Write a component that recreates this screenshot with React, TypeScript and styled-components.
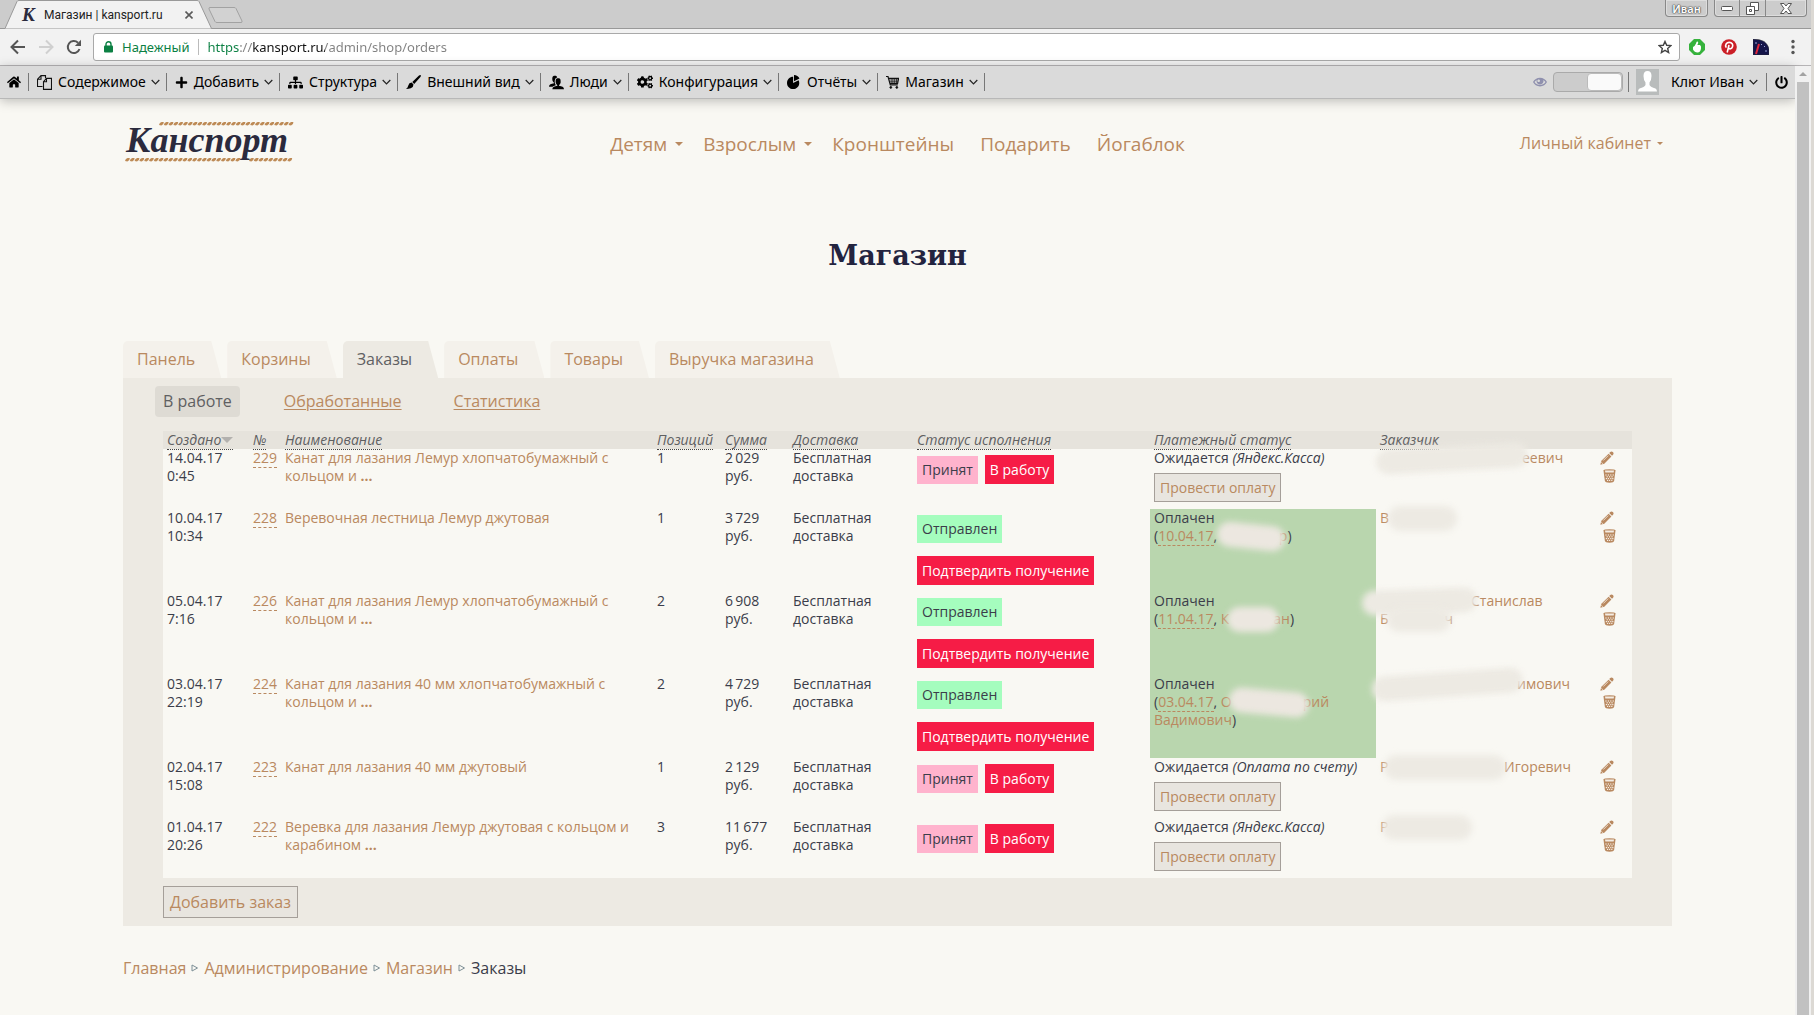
import React from 'react';
import styled, { createGlobalStyle, css } from 'styled-components';
import { FaHome, FaPlus, FaSitemap, FaCogs, FaPowerOff } from 'react-icons/fa';
import { ImUsers, ImPieChart, ImEye } from 'react-icons/im';

const c = {
  page: '#f9f8f3',
  accent: '#b98960',
  ink: '#3b3d4a',
  muted: '#5f6062',
  panel: '#edeae3',
  head: '#e6e3dc',
  red: '#f61c46',
  green: '#b9d6ae',
};

const GlobalStyle = createGlobalStyle`
  *, *::before, *::after { box-sizing: border-box; }
  body { margin: 0; background: ${c.page}; }
  button, input { font: inherit; color: inherit; }
  a { color: inherit; text-decoration: none; }
`;

const uiFont = css`font-family: "Noto Sans", "Open Sans", sans-serif;`;

const Screen = styled.div`
  min-height: 100vh;
  display: flex;
  flex-direction: column;
  background: ${c.page};
  border-right: 3px solid #dcd9d4;
  font-family: "Open Sans", "Noto Sans", sans-serif;
`;

/* ---------- browser window ---------- */

const TabStrip = styled.div`
  ${uiFont}
  display: flex;
  align-items: flex-start;
  height: 29px;
  background: #ccc;
  border-bottom: 1px solid #999;
`;

const BrowserTab = styled.div`
  position: relative;
  display: flex;
  align-items: center;
  width: 207px;
  height: 29px;
  margin-left: 5px;
  padding: 0 19px 0 17px;
  font-family: Roboto, "Noto Sans", sans-serif;
  font-size: 12px;
  color: #222;
`;

const TabShape = styled.svg`
  position: absolute;
  inset: 0;
`;

const Favicon = styled.span`
  position: relative;
  width: 16px;
  font: italic bold 19px/20px "Liberation Serif", serif;
  color: #2b2a3d;
`;

const TabTitle = styled.span`
  position: relative;
  flex: 1;
  margin-left: 6px;
  white-space: nowrap;
`;

const PlainButton = styled.button`
  position: relative;
  display: flex;
  align-items: center;
  justify-content: center;
  padding: 0;
  border: 0;
  background: none;
  cursor: pointer;
`;

const NewTab = styled(PlainButton)`
  margin: 6px 0 0 -4px;
`;

const WindowControls = styled.div`
  display: flex;
  gap: 6px;
  margin-left: auto;
  padding-right: 4px;
`;

const ControlGroup = styled.div`
  display: flex;
  height: 17px;
  border: 1px solid #888;
  border-top: 0;
  border-radius: 0 0 4px 4px;
  box-shadow: inset 0 0 0 1px #ddd;
`;

const Control = styled(PlainButton)<{ $w: number }>`
  width: ${p => p.$w}px;
  font-size: 11px;
  font-weight: 600;
  color: #fff;
  text-shadow: 0 0 1px #444, 0 0 1px #444, 0 0 2px #444;
  & + & { border-left: 1px solid #888; }
`;

const AddressRow = styled.div`
  ${uiFont}
  display: flex;
  align-items: center;
  height: 37px;
  padding: 0 10px;
  background: #f2f2f2;
  border-bottom: 1px solid #b6b4b6;
`;

const NavButtons = styled.div`
  display: flex;
  gap: 12px;
  margin-right: 11px;
`;

const AddressBar = styled.div`
  display: flex;
  align-items: center;
  flex: 1;
  height: 28px;
  margin-right: 9px;
  padding: 0 7px 0 10px;
  background: #fff;
  border: 1px solid #a9a9a9;
  border-radius: 3px;
  font-size: 13px;
`;

const Secure = styled.span`
  display: flex;
  align-items: center;
  gap: 9px;
  padding-right: 9px;
  border-right: 1px solid #bbb;
  line-height: 16px;
  color: #0b8043;
`;

const UrlInput = styled.input`
  flex: 1;
  min-width: 0;
  margin-left: 8px;
  padding: 0;
  border: 0;
  outline: 0;
  line-height: 20px;
  background: linear-gradient(90deg, #0b8043 32px, #808080 32px 45px, #111 45px 118px, #808080 118px);
  background-clip: text;
  -webkit-background-clip: text;
  -webkit-text-fill-color: transparent;
`;

const Extensions = styled.div`
  display: flex;
  align-items: center;
  gap: 16px;
`;

/* ---------- page frame ---------- */

const Viewport = styled.div`
  flex: 1;
  display: flex;
`;

const Page = styled.div`
  flex: 1;
  min-width: 0;
`;

const ScrollTrack = styled.div`
  display: flex;
  flex-direction: column;
  width: 16px;
  background: #f1f1f1;
`;

const ScrollUp = styled(PlainButton)`
  height: 16px;
`;

const ScrollThumb = styled.div`
  flex: 1;
  margin: 0 2px;
  background: #c1c1c1;
`;

/* ---------- admin toolbar ---------- */

const AdminBar = styled.nav`
  ${uiFont}
  display: flex;
  align-items: center;
  height: 33px;
  padding: 0 7px;
  background: #dadada;
  border-bottom: 1px solid #b8b8b8;
  box-shadow: 0 2px 12px rgba(0, 0, 0, 0.25);
  font-size: 14px;
  line-height: 20px;
  color: #000;
`;

const AdminItem = styled(PlainButton)`
  justify-content: flex-start;
  height: 18px;
  padding: 0 6px 0 8px;
  border-right: 1px solid #777;
  white-space: nowrap;
  & > svg:first-child { margin-right: 6px; flex: none; }
  & > svg:last-child { margin-left: 5px; flex: none; }
`;

const HomeItem = styled(AdminItem)`
  padding: 0 7px 0 0;
  & > svg:first-child { margin: 0; }
`;

const AdminRight = styled.div`
  display: flex;
  align-items: center;
  margin-left: auto;
`;

const PreviewToggle = styled.label`
  display: flex;
  align-items: center;
  gap: 6px;
  padding-right: 5px;
  border-right: 1px solid #777;
  color: #8f90ae;
`;

const Switch = styled.input`
  appearance: none;
  display: flex;
  width: 70px;
  height: 20px;
  margin: 0;
  background: #ccc;
  border: 1px solid #aaa;
  border-radius: 4px;
  &::after {
    content: "";
    width: 35px;
    margin-left: auto;
    background: #fafafa;
    border: 1px solid #bbb;
    border-radius: 4px;
  }
`;

const UserItem = styled(AdminItem)`
  height: 26px;
  padding: 0 8px 0 7px;
  border: 0;
  & > svg:first-child { margin-right: 12px; }
`;

const PowerItem = styled(PlainButton)`
  height: 18px;
  padding-left: 8px;
  border-left: 1px solid #777;
`;

/* ---------- site ---------- */

const Container = styled.div`
  padding: 0 123px;
  color: ${c.ink};
`;

const Header = styled.header`
  display: grid;
  grid-template-columns: 1fr auto 1fr;
  align-items: start;
  padding-top: 22px;
  color: ${c.accent};
`;

const MainNav = styled.nav`
  display: flex;
  padding-top: 8px;
  font-size: 19px;
  line-height: 30px;
`;

const MainLink = styled.a<{ $caret?: boolean }>`
  display: flex;
  align-items: center;
  gap: 8px;
  padding: 0 ${p => (p.$caret ? 7 : 13)}px 0 13px;
`;

const Account = styled.a`
  display: flex;
  align-items: center;
  justify-self: end;
  gap: 6px;
  padding: 9px 9px 0 0;
  font-size: 16px;
  line-height: 26px;
`;

const Title = styled.h1`
  margin: 66px 0 0;
  font: bold 27px/44px "Roboto Slab", "DejaVu Serif", serif;
  text-align: center;
  color: #23243f;
`;

const Tabs = styled.nav`
  display: flex;
  gap: 6px;
  margin-top: 63px;
`;

const Tab = styled.a<{ $active?: boolean }>`
  padding: 0 26px 0 14px;
  border-radius: 5px 0 0 0;
  background: ${p => (p.$active ? c.panel : '#f4f1eb')};
  color: ${p => (p.$active ? c.muted : c.accent)};
  clip-path: polygon(0 0, calc(100% - 10px) 0, 100% 100%, 0 100%);
  font-size: 16px;
  line-height: 37px;
`;

const Panel = styled.section`
  padding: 8px 40px 8px;
  background: ${c.panel};
`;

const SubNav = styled.nav`
  display: flex;
  gap: 28px;
  margin: 0 0 14px -8px;
`;

const SubLink = styled.a<{ $active?: boolean }>`
  padding: 0 8px;
  border-radius: 4px;
  font-size: 16px;
  line-height: 31px;
  ${p =>
    p.$active
      ? css`background: #dedbd4; color: ${c.muted};`
      : css`margin-left: 8px; color: ${c.accent}; text-decoration: underline; text-underline-offset: 2px;`}
`;

const OrdersTable = styled.table`
  width: 100%;
  table-layout: fixed;
  border-collapse: collapse;
  background: ${c.page};
  font-size: 14px;
  line-height: 18px;
`;

const Th = styled.th`
  height: 18px;
  padding: 0 4px;
  background: ${c.head};
  text-align: left;
  font-weight: 400;
  font-style: italic;
  color: ${c.muted};
  white-space: nowrap;
`;

const SortLink = styled.a`
  display: inline-flex;
  align-items: center;
  height: 19px;
  margin-bottom: -1px;
  border-bottom: 1px dotted #444;
`;

const Row = styled.tr<{ $tall?: boolean }>`
  height: ${p => (p.$tall ? 83 : 60)}px;
  vertical-align: top;
`;

const Td = styled.td<{ $paid?: boolean }>`
  padding: 0 4px;
  background: ${p => (p.$paid ? c.green : 'transparent')};
`;

const Line = styled.span`
  display: block;
  white-space: nowrap;
`;

const AccentLink = styled.a`
  color: ${c.accent};
`;

const DashedLink = styled(AccentLink)`
  display: inline-block;
  height: 19px;
  margin-bottom: -1px;
  border-bottom: 1px dashed ${c.accent};
  vertical-align: top;
`;

const StatusCell = styled.div<{ $stack?: boolean }>`
  display: flex;
  flex-direction: ${p => (p.$stack ? 'column' : 'row')};
  align-items: ${p => (p.$stack ? 'flex-start' : 'flex-end')};
  gap: ${p => (p.$stack ? 13 : 7)}px;
  padding-top: 6px;
`;

const Badge = styled.span<{ $done?: boolean }>`
  padding: 0 5px;
  background: ${p => (p.$done ? '#a5fdbe' : '#ffb3cd')};
  line-height: 28px;
`;

const ActionButton = styled.button`
  padding: 0 5px;
  border: 0;
  background: ${c.red};
  color: #fff;
  font-weight: 500;
  line-height: 29px;
`;

const OutlineButton = styled.button<{ $large?: boolean }>`
  display: block;
  margin-top: ${p => (p.$large ? 8 : 6)}px;
  padding: 0 ${p => (p.$large ? 6 : 5)}px;
  border: 1px solid #a59f99;
  background: #e8e5df;
  color: ${c.accent};
  font-size: ${p => (p.$large ? 16 : 14)}px;
  line-height: ${p => (p.$large ? 30 : 27)}px;
`;

const Smudge = styled.span<{ $w: number; $warm?: boolean; $lead?: number; $tilt?: number }>`
  position: relative;
  display: inline-block;
  width: ${p => p.$w}px;
  height: 18px;
  vertical-align: top;
  &::before {
    content: "";
    position: absolute;
    inset: -3px -6px -4px ${p => -(p.$lead ?? 4)}px;
    border-radius: 13px;
    background: ${p => (p.$warm ? '#ece7e0' : c.panel)};
    filter: blur(3px);
    transform: rotate(${p => p.$tilt ?? 0}deg);
  }
`;

const Actions = styled.div`
  display: flex;
  flex-direction: column;
  color: ${c.accent};
`;

const RowAction = styled(PlainButton)<{ $indent?: boolean }>`
  align-self: flex-start;
  height: 18px;
  margin-left: ${p => (p.$indent ? 3 : 0)}px;
`;

const Crumbs = styled.nav`
  display: flex;
  align-items: center;
  gap: 5px;
  padding: 30px 0;
  font-size: 16px;
  line-height: 24px;
`;

/* ---------- drawings ---------- */

const Chevron = () => (
  <svg width="9" height="6" viewBox="0 0 9 6" fill="none" stroke="#222" strokeWidth="1.2">
    <path d="M.7 1 4.5 4.8 8.3 1" />
  </svg>
);

const Caret = ({ w, color = c.accent }: { w: number; color?: string }) => (
  <svg width={w} height={w / 2} viewBox="0 0 8 4" fill={color}>
    <path d="M0 0h8L4 4z" />
  </svg>
);

const FilesIcon = () => (
  <svg width="15" height="15" viewBox="0 0 15 15" fill="none" stroke="#111" strokeWidth="1.1">
    <path d="M5.5 11.5h-5V4.200L4 .6h4.500v2.600M4 .6v3.600H.5" />
    <path d="M9.500 3.400h5v11h-8V6.600zM9.500 3.400v3.400h-3" />
  </svg>
);

const BrushIcon = () => (
  <svg width="15" height="15" viewBox="0 0 15 15" fill="#000">
    <path d="M14.700.3q.6.6-.3 1.700L8.200 8.900 6.300 7 13 .6q1.100-.9 1.700-.3z" />
    <path d="M5.600 7.600 7.500 9.500Q7.400 12.400 4.800 13.200 2.600 14 0 14q1.900-1.500 2.300-3.500.6-2.700 3.300-2.900z" />
  </svg>
);

const CartIcon = () => (
  <svg width="13" height="14" viewBox="0 0 13 14" fill="none" stroke="#111">
    <path d="M0 1.500h2l2.300 8.400h7.500M2.600 3.400h10l-1 5H4" strokeWidth="1.200" />
    <path d="M3.200 5h9M3.600 6.700h8.300M6 3.400v5M8.300 3.400v5M10.500 3.400v5" strokeWidth=".7" />
    <circle cx="4.800" cy="12.400" r=".9" fill="#111" />
    <circle cx="10.800" cy="12.400" r=".9" fill="#111" />
  </svg>
);

const PencilIcon = () => (
  <svg width="14" height="14" viewBox="0 0 14 14">
    <path d="M10 1.300q1.400-1.600 2.900-.2 1.400 1.400-.1 2.800l-.8.8L9.200 2.100z" fill={c.accent} />
    <path d="M8.600 2.700 11.400 5.500 4.300 12.700.3 13.700 1.400 9.800z" fill={c.accent} />
    <path d="M8.200 4.600 3.300 9.500" stroke="#f4ece2" strokeWidth=".8" />
    <path d="M1.400 11.300l1.400 1.400" stroke="#f4ece2" strokeWidth=".9" />
  </svg>
);

const TrashIcon = () => (
  <svg width="13" height="14" viewBox="0 0 13 14">
    <path d="M.5 1.500Q.5.2 6.500.2t6 1.300L11.200 11.600q-.3 2.200-4.700 2.200t-4.700-2.200z" fill={c.accent} />
    <path d="M2 1.600h9l-.3 1.800H2.300z" fill="#f4ece2" />
    <g fill="#f4ece2">
      {[[3, 6], [5.4, 6], [7.8, 6], [10.2, 6], [4.2, 7.8], [6.6, 7.8], [9, 7.8], [3.4, 9.6], [5.4, 9.6], [7.8, 9.6], [9.8, 9.6], [4.6, 11.4], [6.6, 11.4], [8.800, 11.4]].map(([x, y]) => (
        <rect key={`${x}-${y}`} x={x - 0.6} y={y - 0.6} width="1.200" height="1.200" />
      ))}
    </g>
  </svg>
);

const Rope = ({ x, y, n }: { x: number; y: number; n: number }) => (
  <g fill="#bd8a55">
    {Array.from({ length: n }, (_, i) => (
      <path key={i} d={`M${x + i * 4.8} ${y + 3}q.4-2.600 2.600-3h2.200q.2 2.600-2.400 3.400z`} />
    ))}
  </g>
);

const Logo = () => (
  <svg width="172" height="42" viewBox="0 0 172 42" role="img" aria-label="Канспорт">
    <Rope x={36} y={1} n={28} />
    <Rope x={2} y={37} n={24} />
    <Rope x={126} y={37} n={9} />
    <text x="3" y="31" fontFamily="Liberation Serif, serif" fontStyle="italic" fontWeight="700" fontSize="36" fill="#2b2a3d">
      Канспорт
    </text>
  </svg>
);

const Avatar = () => (
  <svg width="23" height="26" viewBox="0 0 23 26">
    <rect width="23" height="26" fill="#b9bcbc" />
    <path d="M7.500 7q0-5 4-5t4 5q0 4-2 6.500v2.500q1 2 6 3.500 1.500 1 1.500 3H2q0-2 1.500-3 5-1.500 6-3.500v-2.500q-2-2.500-2-6.500z" fill="#fff" />
  </svg>
);

/* ---------- data ---------- */

const adminItems = [
  { label: 'Содержимое', icon: <FilesIcon /> },
  { label: 'Добавить', icon: <FaPlus size={13} /> },
  { label: 'Структура', icon: <FaSitemap size={15} /> },
  { label: 'Внешний вид', icon: <BrushIcon /> },
  { label: 'Люди', icon: <ImUsers size={15} /> },
  { label: 'Конфигурация', icon: <FaCogs size={16} /> },
  { label: 'Отчёты', icon: <ImPieChart size={14} /> },
  { label: 'Магазин', icon: <CartIcon /> },
];

const mainLinks = [
  { label: 'Детям', caret: true },
  { label: 'Взрослым', caret: true },
  { label: 'Кронштейны' },
  { label: 'Подарить' },
  { label: 'Йогаблок' },
];

const tabs = ['Панель', 'Корзины', 'Заказы', 'Оплаты', 'Товары', 'Выручка магазина'];

const columns: { label: string; w?: number }[] = [
  { label: 'Создано', w: 86 },
  { label: '№', w: 32 },
  { label: 'Наименование' },
  { label: 'Позиций', w: 68 },
  { label: 'Сумма', w: 68 },
  { label: 'Доставка', w: 124 },
  { label: 'Статус исполнения', w: 237 },
  { label: 'Платежный статус', w: 226 },
  { label: 'Заказчик', w: 220 },
  { label: '', w: 36 },
];

type Order = {
  date: string;
  time: string;
  id: number;
  name: string;
  cut?: boolean;
  qty: number;
  sum: string;
  pending?: string;
  paid?: React.ReactNode;
  customer: React.ReactNode;
};

const orders: Order[] = [
  {
    date: '14.04.17', time: '0:45', id: 229, name: 'Канат для лазания Лемур хлопчатобумажный с кольцом и', cut: true, qty: 1, sum: '2\u2009029',
    pending: '(Яндекс.Касса)',
    customer: <Line><Smudge $w={142} $tilt={-3} />еевич</Line>,
  },
  {
    date: '10.04.17', time: '10:34', id: 228, name: 'Веревочная лестница Лемур джутовая', qty: 1, sum: '3\u2009729',
    paid: <Line>(<DashedLink href="#">10.04.17</DashedLink>, <Smudge $w={58} $warm $tilt={6} /><AccentLink href="#">р</AccentLink>)</Line>,
    customer: <Line>В<Smudge $w={62} $lead={1} /></Line>,
  },
  {
    date: '05.04.17', time: '7:16', id: 226, name: 'Канат для лазания Лемур хлопчатобумажный с кольцом и', cut: true, qty: 2, sum: '6\u2009908',
    paid: <Line>(<DashedLink href="#">11.04.17</DashedLink>, <AccentLink href="#">К<Smudge $w={44} $warm $lead={2} />ан</AccentLink>)</Line>,
    customer: <><Line><Smudge $w={91} $lead={18} $tilt={-2} />Станислав</Line><Line>Б<Smudge $w={56} $lead={2} />ч</Line></>,
  },
  {
    date: '03.04.17', time: '22:19', id: 224, name: 'Канат для лазания 40 мм хлопчатобумажный с кольцом и', cut: true, qty: 2, sum: '4\u2009729',
    paid: <><Line>(<DashedLink href="#">03.04.17</DashedLink>, <AccentLink href="#">О<Smudge $w={71} $warm $lead={3} $tilt={5} />рий</AccentLink></Line><Line><AccentLink href="#">Вадимович</AccentLink>)</Line></>,
    customer: <Line><Smudge $w={137} $lead={8} $tilt={-4} />имович</Line>,
  },
  {
    date: '02.04.17', time: '15:08', id: 223, name: 'Канат для лазания 40 мм джутовый', qty: 1, sum: '2\u2009129',
    pending: '(Оплата по счету)',
    customer: <Line>Р<Smudge $w={112} $lead={4} />{' '}Игоревич</Line>,
  },
  {
    date: '01.04.17', time: '20:26', id: 222, name: 'Веревка для лазания Лемур джутовая с кольцом и карабином', cut: true, qty: 3, sum: '11\u2009677',
    pending: '(Яндекс.Касса)',
    customer: <Line>Р<Smudge $w={78} $lead={6} /></Line>,
  },
];

/* ---------- views ---------- */

const BrowserChrome = () => (
  <>
    <TabStrip>
      <BrowserTab>
        <TabShape width="207" height="29" viewBox="0 0 207 29">
          <path d="M0 28.500 12 1.500Q12.500.5 14 .5H192q1.500 0 2 1L206.500 28.500" fill="#f2f2f2" stroke="#999" />
        </TabShape>
        <Favicon>К</Favicon>
        <TabTitle>Магазин | kansport.ru</TabTitle>
        <PlainButton aria-label="Закрыть вкладку">
          <svg width="8" height="8" viewBox="0 0 8 8" stroke="#5a5a5a" strokeWidth="1.600"><path d="M.5.5l7 7M7.500.5l-7 7" /></svg>
        </PlainButton>
      </BrowserTab>
      <NewTab aria-label="Новая вкладка">
        <svg width="35" height="18" viewBox="0 0 35 18" fill="#d2d2d2" stroke="#a2a2a2"><path d="M2 1.500H26q1.500 0 2 1L34 15q.5 1.500-1 1.500H9q-1.500 0-2-1L1 3Q.5 1.500 2 1.500z" /></svg>
      </NewTab>
      <WindowControls>
        <ControlGroup><Control $w={41}>Иван</Control></ControlGroup>
        <ControlGroup>
          <Control $w={24} aria-label="Свернуть">
            <svg width="12" height="5" viewBox="0 0 12 5"><rect x=".5" y=".5" width="11" height="4" rx="1" fill="#fff" stroke="#555" /></svg>
          </Control>
          <Control $w={26} aria-label="Восстановить">
            <svg width="13" height="13" viewBox="0 0 13 13" fill="#fff" stroke="#555"><path d="M4.500.5h8v8h-8z" /><path d="M.5 4.500h8v8h-8z" /><path d="M3.500 7.500h2v2h-2z" /></svg>
          </Control>
          <Control $w={41} aria-label="Закрыть">
            <svg width="12" height="11" viewBox="0 0 12 11" fill="#fff" stroke="#555"><path d="M.5.5h3.500L6 3 8 .5h3.500L8 5.500l3.500 5H8L6 8l-2 2.500H.5l3.500-5z" /></svg>
          </Control>
        </ControlGroup>
      </WindowControls>
    </TabStrip>
    <AddressRow>
      <NavButtons>
        <PlainButton aria-label="Назад">
          <svg width="16" height="16" viewBox="0 0 16 16" fill="none" stroke="#555" strokeWidth="2"><path d="M15 8H2M8 1.500 1.500 8 8 14.500" /></svg>
        </PlainButton>
        <PlainButton aria-label="Вперёд">
          <svg width="16" height="16" viewBox="0 0 16 16" fill="none" stroke="#d0d0d0" strokeWidth="2"><path d="M1 8h13M8 1.500 14.500 8 8 14.500" /></svg>
        </PlainButton>
        <PlainButton aria-label="Обновить">
          <svg width="16" height="16" viewBox="0 0 16 16"><path d="M13.500 10A6 6 0 1 1 12 3.700" fill="none" stroke="#555" strokeWidth="2" /><path d="M15 .8v6.200H8.800z" fill="#555" /></svg>
        </PlainButton>
      </NavButtons>
      <AddressBar>
        <Secure>
          <svg width="9" height="12" viewBox="0 0 9 12"><rect y="4.500" width="9" height="7" rx="1" fill="#0b8043" /><path d="M2 5V3.200a2.500 2.500 0 0 1 5 0V5" fill="none" stroke="#0b8043" strokeWidth="1.400" /></svg>
          Надежный
        </Secure>
        <UrlInput aria-label="Адрес" defaultValue="https://kansport.ru/admin/shop/orders" />
        <PlainButton aria-label="В закладки">
          <svg width="14" height="14" viewBox="0 0 24 24" fill="none" stroke="#444" strokeWidth="2.400"><path d="m12 2.500 2.900 6.600 7.100.6-5.400 4.700 1.600 7-6.200-3.700-6.200 3.700 1.600-7L2 9.700l7.100-.6z" /></svg>
        </PlainButton>
      </AddressBar>
      <Extensions>
        <PlainButton aria-label="Рекомендации">
          <svg width="16" height="16" viewBox="0 0 16 16"><path d="M5 0h6l5 5v6l-5 5H5l-5-5V5z" fill="#36b23c" /><path d="M4 8q2-1 3-3.500.5-2.500 1.500-2 1.500 1-.2 3.500H11q1.500 1 1 3.500-.5 4-3.500 4T4 10.500z" fill="#fff" /></svg>
        </PlainButton>
        <PlainButton aria-label="Pinterest">
          <svg width="16" height="16" viewBox="0 0 16 16"><circle cx="8" cy="8" r="7.800" fill="#cb1f27" /><path d="M6.200 13.500 8 6M5.300 8.600C3.500 5.800 5.600 3.400 8.300 3.400s4 2.200 3.200 4.300c-.8 2.300-3 2.700-4 1.300" fill="none" stroke="#fff" strokeWidth="1.600" /></svg>
        </PlainButton>
        <PlainButton aria-label="Скорость">
          <svg width="16" height="16" viewBox="0 0 16 16"><path d="M0 0q14 0 16 10v6H0z" fill="#15154a" stroke="#333" strokeWidth=".5" /><path d="m6 5-3 10" stroke="#e0263a" strokeWidth="2" /><path d="m3 3v2M8 5l1 1M11 8l1-1M12 12h2" stroke="#9aa4d8" /></svg>
        </PlainButton>
        <PlainButton aria-label="Меню">
          <svg width="16" height="16" viewBox="0 0 16 16" fill="#555"><circle cx="8" cy="2.500" r="1.700" /><circle cx="8" cy="8" r="1.700" /><circle cx="8" cy="13.500" r="1.700" /></svg>
        </PlainButton>
      </Extensions>
    </AddressRow>
  </>
);

const Toolbar = () => (
  <AdminBar>
    <HomeItem aria-label="Домой"><FaHome size={14} /></HomeItem>
    {adminItems.map(i => (
      <AdminItem key={i.label}>{i.icon}{i.label}<Chevron /></AdminItem>
    ))}
    <AdminRight>
      <PreviewToggle aria-label="Просмотр">
        <ImEye size={14} />
        <Switch type="checkbox" defaultChecked />
      </PreviewToggle>
      <UserItem><Avatar />Клют Иван<Chevron /></UserItem>
      <PowerItem aria-label="Выход"><FaPowerOff size={13} /></PowerItem>
    </AdminRight>
  </AdminBar>
);

const OrderRow = ({ o }: { o: Order }) => (
  <Row $tall={!!o.paid}>
    <Td><Line>{o.date}</Line><Line>{o.time}</Line></Td>
    <Td><DashedLink href="#">{o.id}</DashedLink></Td>
    <Td><AccentLink href="#">{o.name}{o.cut && <>{' '}<b>...</b></>}</AccentLink></Td>
    <Td>{o.qty}</Td>
    <Td><Line>{o.sum}</Line><Line>руб.</Line></Td>
    <Td><Line>Бесплатная</Line><Line>доставка</Line></Td>
    <Td>
      <StatusCell $stack={!!o.paid}>
        <Badge $done={!!o.paid}>{o.paid ? 'Отправлен' : 'Принят'}</Badge>
        <ActionButton>{o.paid ? 'Подтвердить получение' : 'В работу'}</ActionButton>
      </StatusCell>
    </Td>
    <Td $paid={!!o.paid}>
      {o.paid ? (
        <><Line>Оплачен</Line>{o.paid}</>
      ) : (
        <><Line>Ожидается <i>{o.pending}</i></Line><OutlineButton>Провести оплату</OutlineButton></>
      )}
    </Td>
    <Td><AccentLink href="#">{o.customer}</AccentLink></Td>
    <Td>
      <Actions>
        <RowAction aria-label="Изменить"><PencilIcon /></RowAction>
        <RowAction aria-label="Удалить" $indent><TrashIcon /></RowAction>
      </Actions>
    </Td>
  </Row>
);

export default function App() {
  return (
    <Screen>
      <GlobalStyle />
      <BrowserChrome />
      <Viewport>
        <Page>
          <Toolbar />
          <Container>
            <Header>
              <a href="#"><Logo /></a>
              <MainNav>
                {mainLinks.map(l => (
                  <MainLink key={l.label} href="#" $caret={l.caret}>{l.label}{l.caret && <Caret w={8} />}</MainLink>
                ))}
              </MainNav>
              <Account href="#">Личный кабинет<Caret w={6} /></Account>
            </Header>
            <Title>Магазин</Title>
            <Tabs>
              {tabs.map(t => <Tab key={t} href="#" $active={t === 'Заказы'}>{t}</Tab>)}
            </Tabs>
            <Panel>
              <SubNav>
                <SubLink href="#" $active>В работе</SubLink>
                <SubLink href="#">Обработанные</SubLink>
                <SubLink href="#">Статистика</SubLink>
              </SubNav>
              <OrdersTable>
                <colgroup>
                  {columns.map((col, i) => <col key={i} width={col.w} />)}
                </colgroup>
                <thead>
                  <tr>
                    {columns.map((col, i) => (
                      <Th key={i}>
                        {col.label && <SortLink href="#">{col.label}{i === 0 && <Caret w={12} color="#b3b1ae" />}</SortLink>}
                      </Th>
                    ))}
                  </tr>
                </thead>
                <tbody>{orders.map(o => <OrderRow key={o.id} o={o} />)}</tbody>
              </OrdersTable>
              <OutlineButton $large>Добавить заказ</OutlineButton>
            </Panel>
            <Crumbs>
              {['Главная', 'Администрирование', 'Магазин'].map(b => (
                <React.Fragment key={b}>
                  <AccentLink href="#">{b}</AccentLink>
                  <svg width="8" height="8" viewBox="0 0 8 8" fill="none" stroke="#7d8f96"><path d="M1 1v6l5.500-3z" /></svg>
                </React.Fragment>
              ))}
              <span>Заказы</span>
            </Crumbs>
          </Container>
        </Page>
        <ScrollTrack>
          <ScrollUp aria-label="Вверх">
            <svg width="8" height="4" viewBox="0 0 8 4" fill="#a3a3a3"><path d="M4 0l4 4H0z" /></svg>
          </ScrollUp>
          <ScrollThumb />
        </ScrollTrack>
      </Viewport>
    </Screen>
  );
}
